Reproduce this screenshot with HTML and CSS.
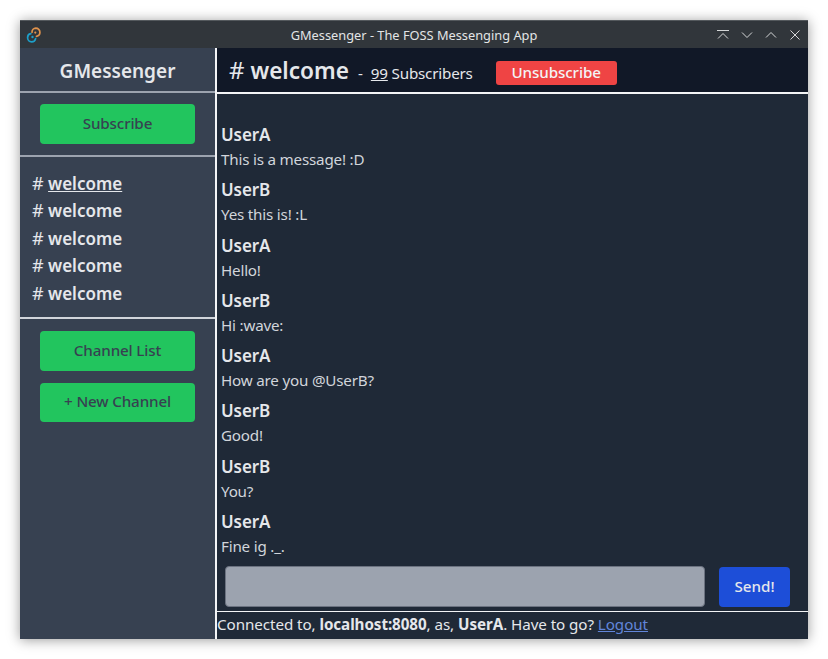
FILE: index.html
```html
<!DOCTYPE html>
<html lang="en">
<head>
<meta charset="utf-8">
<title>GMessenger</title>
<link rel="stylesheet" href="styles.css">
</head>
<body>
<div class="window">
  <header class="titlebar">
    <svg class="app-icon" width="16" height="16" viewBox="0 0 16 16" fill="none" stroke-width="1.7" stroke-linecap="round">
      <path d="M6 5.200A4 4 0 0 1 9.800 1.200a4.100 4.100 0 0 1 4.100 4.100 4 4 0 0 1-3.400 4" stroke="#e0934c"/>
      <path d="M9.600 11.600a4 4 0 0 1-4 3.200 4.100 4.100 0 0 1-4-4.100 4 4 0 0 1 3.200-4" stroke="#1d9fc9"/>
      <circle cx="9.300" cy="5.600" r="1.100" fill="#e0934c" stroke="none"/>
      <circle cx="6.500" cy="10" r="1.200" fill="#1d9fc9" stroke="none"/>
    </svg>
    <span class="title">GMessenger - The FOSS Messenging App</span>
    <div class="controls">
      <svg width="14" height="14" viewBox="0 0 14 14" fill="none" stroke="#d5d7d8" stroke-width="1"><path d="M1 2.500h12M2 10.500l5-5 5 5"/></svg>
      <svg width="14" height="14" viewBox="0 0 14 14" fill="none" stroke="#d5d7d8" stroke-width="1"><path d="M2 4.500l5 5 5-5"/></svg>
      <svg width="14" height="14" viewBox="0 0 14 14" fill="none" stroke="#d5d7d8" stroke-width="1"><path d="M2 9.500l5-5 5 5"/></svg>
      <svg width="14" height="14" viewBox="0 0 14 14" fill="none" stroke="#d5d7d8" stroke-width="1"><path d="M2.500 2.500l9 9M11.500 2.500l-9 9"/></svg>
    </div>
  </header>
  <div class="app">
    <aside class="sidebar">
      <h1 class="brand">GMessenger</h1>
      <div class="side-section">
        <button class="btn green">Subscribe</button>
      </div>
      <ul class="channels">
        <li><span class="hash">#</span> <a class="active">welcome</a></li>
        <li><span class="hash">#</span> <a>welcome</a></li>
        <li><span class="hash">#</span> <a>welcome</a></li>
        <li><span class="hash">#</span> <a>welcome</a></li>
        <li><span class="hash">#</span> <a>welcome</a></li>
      </ul>
      <div class="side-section stack">
        <button class="btn green">Channel List</button>
        <button class="btn green">+ New Channel</button>
      </div>
    </aside>
    <main class="main">
      <div class="channel-head">
        <h2 class="channel-name"><span class="hash">#</span> welcome</h2>
        <span class="dash">-</span>
        <span class="subs"><u>99</u> Subscribers</span>
        <button class="unsub">Unsubscribe</button>
      </div>
      <div class="messages">
        <div class="msg"><div class="user">UserA</div><div class="text">This is a message! :D</div></div>
        <div class="msg"><div class="user">UserB</div><div class="text">Yes this is! :L</div></div>
        <div class="msg"><div class="user">UserA</div><div class="text">Hello!</div></div>
        <div class="msg"><div class="user">UserB</div><div class="text">Hi :wave:</div></div>
        <div class="msg"><div class="user">UserA</div><div class="text">How are you @UserB?</div></div>
        <div class="msg"><div class="user">UserB</div><div class="text">Good!</div></div>
        <div class="msg"><div class="user">UserB</div><div class="text">You?</div></div>
        <div class="msg"><div class="user">UserA</div><div class="text">Fine ig ._.</div></div>
      </div>
      <div class="composer">
        <input class="input" type="text" aria-label="Message">
        <button class="send">Send!</button>
      </div>
      <footer class="status">Connected to, <b>localhost:8080</b>, as, <b>UserA</b>. Have to go? <a class="logout">Logout</a></footer>
    </main>
  </div>
</div>
</body>
</html>
```
FILE: styles.css
```css
* { box-sizing: border-box; }
html, body { height: 100%; }
body {
  margin: 0;
  padding: 20px;
  background: #fff;
  font-family: "Noto Sans", sans-serif;
  color: #e5e7eb;
  font-size: 15.2px;
}
.window {
  height: 619px;
  display: flex;
  flex-direction: column;
  box-shadow: 0 1px 12px rgba(0,0,0,.4);
  border-top: 1px solid #54595d;
}
.titlebar {
  height: 27px;
  flex: none;
  background: #31363b;
  display: grid;
  grid-template-columns: 1fr auto 1fr;
  align-items: center;
  padding: 0 6px;
}
.app-icon { display: block; }
.title {
  font-size: 12.8px;
  color: #e3e5e6;
}
.controls { display: flex; gap: 10px; justify-self: end; }
.app { flex: 1; display: flex; min-height: 0; }
.sidebar {
  width: 195px;
  flex: none;
  background: #374151;
}
.brand {
  margin: 0;
  height: 45px;
  font-size: 19px;
  font-weight: 600;
  line-height: 46px;
  text-align: center;
  color: #e5e7eb;
  border-bottom: 2px solid #9ca3af;
}
.side-section {
  padding: 11px 20px;
  display: flex;
  flex-direction: column;
  gap: 12px;
  border-bottom: 2px solid #9ca3af;
}
.side-section.stack { padding-top: 12px; border-bottom: 0; }
.btn {
  font: 500 15.2px "Noto Sans", sans-serif;
  letter-spacing: -.15px;
  height: 39.5px;
  width: 155px;
  border: 0;
  border-radius: 4px;
  padding: 0 0 2px;
}
.green { background: #22c55e; color: #374151; }
.channels {
  list-style: none;
  margin: 0;
  padding: 13px 12px 10px;
  border-bottom: 2px solid #d1d5db;
  font-size: 17px;
  font-weight: 600;
  line-height: 27.5px;
}
.channels .active { text-decoration: underline; }
.hash { font-weight: 400; font-size: 18px; }
.channel-name .hash { font-size: 24px; }
.main {
  flex: 1;
  min-width: 0;
  display: flex;
  flex-direction: column;
  background: #1f2937;
  border-left: 2px solid #f3f4f6;
}
.channel-head {
  height: 46px;
  flex: none;
  display: flex;
  align-items: center;
  padding-left: 12px;
  background: #111827;
  border-bottom: 2px solid #f3f4f6;
}
.channel-name {
  margin: 0;
  font-size: 22.6px;
  font-weight: 600;
  line-height: 44px;
}
.dash, .subs, .unsub { position: relative; top: 3px; }
.dash { margin-left: 9px; }
.subs { margin-left: 8px; letter-spacing: -.2px; }
.unsub {
  margin-left: 23px;
  width: 121px;
  height: 24px;
  border: 0;
  border-radius: 3px;
  background: #ef4444;
  color: #f3f4f6;
  font: 500 15.2px "Noto Sans", sans-serif;
  letter-spacing: -.1px;
  padding: 0 0 2px;
}
.messages {
  flex: 1;
  min-height: 0;
  padding: 28px 4px 0;
}
.msg { height: 55.25px; }
.user { font-size: 17px; font-weight: 600; line-height: 25px; letter-spacing: -.1px; }
.text { line-height: 24px; color: #d1d5db; letter-spacing: -.2px; }
.composer {
  flex: none;
  height: 48px;
  display: flex;
  align-items: flex-start;
  padding: 3px 18px 0 8px;
  gap: 14px;
}
.input {
  flex: 1;
  min-width: 0;
  height: 41px;
  border: 1px solid #6b7280;
  border-radius: 4px;
  background: #9ca3af;
}
.send {
  width: 71px;
  height: 39.5px;
  margin-top: 1px;
  border: 0;
  border-radius: 4px;
  background: #1d4ed8;
  color: #e5e7eb;
  font: 500 15.2px "Noto Sans", sans-serif;
  padding: 0 0 2px;
}
.status {
  flex: none;
  height: 28px;
  border-top: 1px solid #f3f4f6;
  line-height: 25px;
  white-space: nowrap;
  letter-spacing: -.07px;
}
.logout { color: #6185d9; text-decoration: underline; }
```
